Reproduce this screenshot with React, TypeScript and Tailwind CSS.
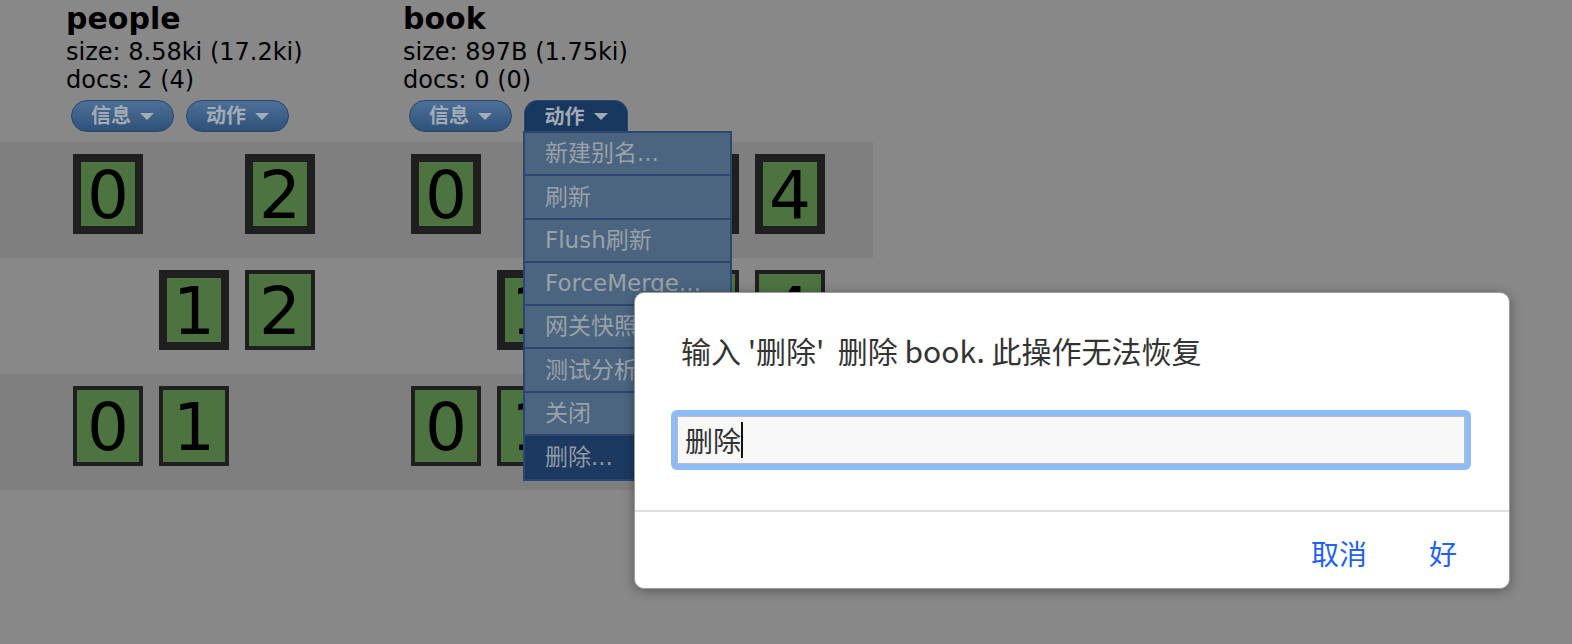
import React from 'react';

type Shard = { n: number; primary: boolean } | null;

interface IndexInfo {
  name: string;
  size: string;
  docs: string;
  rows: Shard[][];
}

const p = (n: number): Shard => ({ n, primary: true });
const r = (n: number): Shard => ({ n, primary: false });

const indices: IndexInfo[] = [
  {
    name: 'people',
    size: 'size: 8.58ki (17.2ki)',
    docs: 'docs: 2 (4)',
    rows: [
      [p(0), null, p(2)],
      [null, p(1), r(2)],
      [r(0), r(1), null],
    ],
  },
  {
    name: 'book',
    size: 'size: 897B (1.75ki)',
    docs: 'docs: 0 (0)',
    rows: [
      [p(0), null, r(2), p(3), p(4)],
      [null, p(1), p(2), r(3), r(4)],
      [r(0), r(1), null, r(3), null],
    ],
  },
];

const menuItems = ['新建别名...', '刷新', 'Flush刷新', 'ForceMerge...', '网关快照', '测试分析器', '关闭', '删除...'];

const headFont = { fontFamily: '"DejaVu Sans", Verdana, "Noto Sans CJK SC", sans-serif' };
const cjkFont = { fontFamily: '"Noto Sans CJK SC", "Noto Sans", sans-serif' };

function Caret() {
  return (
    <span className="ml-[9px] inline-block w-0 h-0 border-l-[7px] border-r-[7px] border-t-[7px] border-l-transparent border-r-transparent border-t-[#a3abb4]" />
  );
}

function PillButton({ label }: { label: string }) {
  return (
    <div className="w-[103px] h-[32px] rounded-full border border-[#274670] bg-gradient-to-b from-[#4d7099] to-[#2f5179] flex items-center justify-center text-[20px] font-bold text-[#a3abb4]">
      <span>{label}</span>
      <Caret />
    </div>
  );
}

function ActiveTab({ label }: { label: string }) {
  return (
    <div className="w-[104px] h-[32px] rounded-t-[14px] bg-[#17375f] border border-b-0 border-[#2b4770] flex items-center justify-center text-[20px] font-bold text-[#a3abb4]">
      <span>{label}</span>
      <Caret />
    </div>
  );
}

function ShardBox({ shard }: { shard: Shard }) {
  if (!shard) return <div className="w-[70px] h-[80px] mr-[16px] shrink-0" />;
  return (
    <div
      className={`w-[70px] h-[80px] mr-[16px] shrink-0 box-border border-[#1f1f1f] bg-[#4d7440] flex items-center justify-center text-[66px] leading-none text-black ${
        shard.primary ? 'border-[8px]' : 'border-[4px]'
      }`}
    >
      <span className="mt-[4px]">{shard.n}</span>
    </div>
  );
}

export default function App() {
  return (
    <div className="relative w-[1572px] h-[644px] overflow-hidden bg-[#888888]" style={headFont}>
      {/* index headers */}
      <div className="flex pl-[66px]">
        {indices.map((idx, i) => (
          <div key={idx.name} className={i === 0 ? 'w-[337px]' : 'w-[400px]'}>
            <div className="text-[30px] font-bold leading-[38px] text-black">{idx.name}</div>
            <div className="text-[24px] leading-[28px] text-black">{idx.size}</div>
            <div className="text-[24px] leading-[28px] text-black">{idx.docs}</div>
            <div className={`mt-[6px] flex gap-[12px] ${i === 0 ? 'ml-[5px]' : 'ml-[6px]'}`}>
              <PillButton label="信息" />
              {i === 1 ? <ActiveTab label="动作" /> : <PillButton label="动作" />}
            </div>
          </div>
        ))}
      </div>

      {/* shard rows */}
      <div className="mt-[10px] w-[873px]">
        {[0, 1, 2].map((row) => (
          <div
            key={row}
            className={`h-[116px] pt-[12px] pl-[66px] flex ${row === 1 ? '' : 'bg-[#7f7f7f]'}`}
          >
            {indices.map((idx, i) => (
              <div key={idx.name} className={`flex ${i === 0 ? 'w-[337px] pl-[7px]' : 'pl-[8px]'}`}>
                {idx.rows[row].map((s, k) => (
                  <ShardBox key={k} shard={s} />
                ))}
              </div>
            ))}
          </div>
        ))}
      </div>

      {/* action menu */}
      <div className="absolute left-[523px] top-[131px] w-[209px] border-2 border-[#2b4770] bg-[#4b6580]">
        {menuItems.map((item, i) => (
          <div
            key={item}
            className={`h-[43.25px] pl-[20px] flex items-center text-[23px] whitespace-nowrap overflow-hidden ${
              i < menuItems.length - 1 ? 'border-b-2 border-[#2b4770]' : ''
            } ${i === menuItems.length - 1 ? 'bg-[#1b3961] text-[#939ba3]' : 'text-[#9aa1a8]'}`}
          >
            {item}
          </div>
        ))}
      </div>

      {/* prompt dialog */}
      <div
        className="absolute left-[634px] top-[292px] w-[876px] h-[297px] rounded-[10px] bg-white border border-[#9c9c9c] shadow-[0_2px_12px_rgba(0,0,0,0.35)]"
        style={cjkFont}
      >
        <div className="pt-[37px] pl-[46px] text-[30px] leading-[40px] text-[#333333] whitespace-pre">
          输入 '删除'  删除 book. 此操作无法恢复
        </div>
        <div className="mt-[40px] ml-[36px] w-[800px] h-[60px] rounded-[6px] bg-[#8fbcf6] p-[6px]">
          <div className="h-full border border-[#bdbdbd] bg-[#f8f8f8] pl-[7px] flex items-center text-[28px] text-[#333333]">
            <span>删除</span>
            <span className="inline-block w-[2px] h-[36px] bg-[#111111]" />
          </div>
        </div>
        <div className="mt-[40px] h-[2px] bg-[#dedede]" />
        <div className="h-[77px] pt-[5px] flex items-center justify-end pr-[52px] gap-[62px] text-[28px] text-[#1f62f4]">
          <span>取消</span>
          <span>好</span>
        </div>
      </div>
    </div>
  );
}
